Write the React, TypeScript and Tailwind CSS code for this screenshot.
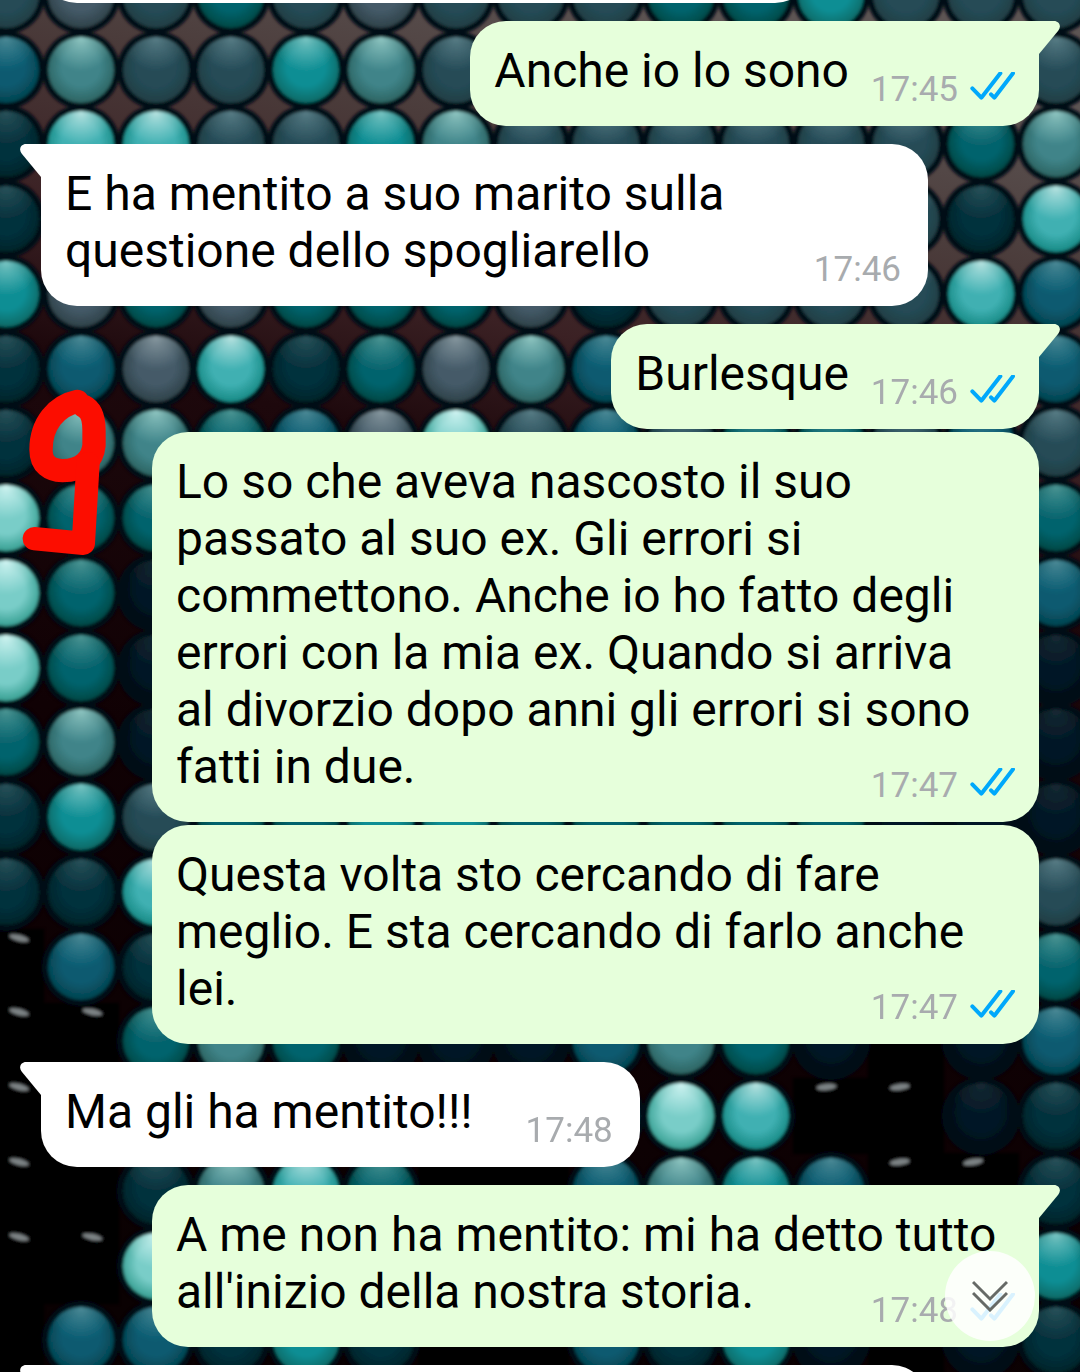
import React from "react";

type Message = {
  text: string;
  time: string;
  mine: boolean;
  tail: boolean;
};

const messages: Message[] = [
  { text: "Anche io lo sono", time: "17:45", mine: true, tail: true },
  { text: "E ha mentito a suo marito sulla questione dello spogliarello", time: "17:46", mine: false, tail: true },
  { text: "Burlesque", time: "17:46", mine: true, tail: true },
  {
    text: "Lo so che aveva nascosto il suo passato al suo ex. Gli errori si commettono. Anche io ho fatto degli errori con la mia ex. Quando si arriva al divorzio dopo anni gli errori si sono fatti in due.",
    time: "17:47",
    mine: true,
    tail: false,
  },
  { text: "Questa volta sto cercando di fare meglio. E sta cercando di farlo anche lei.", time: "17:47", mine: true, tail: false },
  { text: "Ma gli ha mentito!!!", time: "17:48", mine: false, tail: true },
  { text: "A me non ha mentito: mi ha detto tutto all'inizio della nostra storia.", time: "17:48", mine: true, tail: true },
];

/* Bead colours: top highlight, middle, lower rim */
const beads: Record<string, [string, string, string]> = {
  m: ["#d2f5f3", "#79cdc8", "#2f9a8c"],
  b: ["#b9e4e2", "#3fb0b2", "#12857f"],
  l: ["#8fc6c2", "#3f8489", "#2a605d"],
  c: ["#79c6c4", "#0f8e94", "#066560"],
  t: ["#4b9695", "#06636d", "#044540"],
  u: ["#4b8a97", "#085a70", "#05414b"],
  s: ["#587d86", "#254b57", "#203d42"],
  g: ["#8798a0", "#445a68", "#2c3f45"],
  d: ["#29525a", "#04303c", "#022327"],
  n: ["#152a33", "#021726", "#01080d"],
};

/* One letter per bead; k is an unlit bead with a glint, x is fully dark */
const wallpaperRows = [
  "sgstsgsssttcsss",
  "ulssclsssssssss",
  "dbbssclsssssstl",
  "dssssstttssssdb",
  "cgtgtttgdssssbu",
  "dugbdtglustsstu",
  "dlltugmsusttsus",
  "mtttttttttttttt",
  "mtnttttttttttnu",
  "mtnttttttttttnn",
  "tlntttttttttnnn",
  "dcsttcctttttnnn",
  "ddbcttttttttnns",
  "kudddttttttnnnt",
  "kktltnnnultnxnu",
  "kxdcccdnumbkknd",
  "kxdlbtxxulcukkd",
  "kkmcttxxtctxxnc",
  "xuudcdxxudcnxnd",
];

const columnStep = 75;
const rowStep = 75;

function Wallpaper() {
  const cells = wallpaperRows.flatMap((row, r) =>
    row.split("").map((kind, c) => ({
      key: `${r}-${c}`,
      kind,
      c,
      x: 6 + c * columnStep,
      y: -5 + r * rowStep - Math.round(r / 4),
    })),
  );
  const dark = cells.filter(({ kind }) => kind === "k" || kind === "x");
  const lit = cells.filter(({ kind }) => kind !== "k" && kind !== "x");

  return (
    <svg
      className="absolute inset-0 h-full w-full"
      viewBox="0 0 1080 1372"
      preserveAspectRatio="xMidYMid slice"
      aria-hidden="true"
    >
      <defs>
        <linearGradient id="gaps" x1="0.6" y1="0" x2="0.4" y2="1">
          <stop offset="0" stopColor="#5d5554" />
          <stop offset="0.12" stopColor="#4b3c3b" />
          <stop offset="0.25" stopColor="#3b2124" />
          <stop offset="0.35" stopColor="#1d080c" />
          <stop offset="0.6" stopColor="#100104" />
          <stop offset="1" stopColor="#0a0102" />
        </linearGradient>
        <filter id="soft" x="0" y="0" width="100%" height="100%">
          <feGaussianBlur stdDeviation="1.8" />
        </filter>
        {Object.entries(beads).map(([key, [, mid, low]]) => (
          <radialGradient key={key} id={`bead-${key}`} cx="0.5" cy="0.45" r="0.58">
            <stop offset="0" stopColor={mid} />
            <stop offset="0.5" stopColor={mid} />
            <stop offset="1" stopColor={low} />
          </radialGradient>
        ))}
        {Object.entries(beads).map(([key, [top]]) => (
          <radialGradient key={key} id={`shine-${key}`} cx="0.5" cy="0.02" r="0.5">
            <stop offset="0" stopColor={top} />
            <stop offset="0.3" stopColor={top} stopOpacity="0.65" />
            <stop offset="1" stopColor={top} stopOpacity="0" />
          </radialGradient>
        ))}
      </defs>
      <rect width="1080" height="1372" fill="url(#gaps)" />
      <g filter="url(#soft)">
        {dark.map(({ key, kind, c, x, y }) => {
          const gx = x + 13 - c * 1.6;
          const tilt = 14 - c * 1.8;
          return (
            <g key={key}>
              <rect x={x - 38} y={y - 38} width="76" height="76" fill="#010103" />
              {kind === "k" && (
                <ellipse cx={gx} cy={y - 29} rx="10" ry="3" fill="#7d8385" transform={`rotate(${tilt} ${gx} ${y - 29})`} />
              )}
            </g>
          );
        })}
        {lit.map(({ key, kind, x, y }) => (
          <g key={key}>
            <circle cx={x} cy={y} r="39" fill="#010a12" />
            <circle cx={x} cy={y} r="33" fill={`url(#bead-${kind})`} />
            <circle cx={x} cy={y} r="33" fill={`url(#shine-${kind})`} />
          </g>
        ))}
      </g>
    </svg>
  );
}

function RedNine() {
  return (
    <svg
      className="absolute left-5 top-[387px] h-[170px] w-[90px]"
      viewBox="60 50 270 510"
      fill="none"
      stroke="#fc0d00"
      strokeWidth="70"
      strokeLinecap="round"
      strokeLinejoin="round"
      role="img"
      aria-label="9"
    >
      <path d="M232 93C170 106 123 160 123 238C123 282 150 300 188 301C245 301 278 268 282 225V180C282 142 272 118 252 108" />
      <path d="M264 280L250 519L103 505" />
    </svg>
  );
}

function Ticks() {
  return (
    <svg
      className="mb-[6px] h-[30px] w-[45px]"
      viewBox="0 0 135 90"
      fill="none"
      stroke="#00a8fb"
      strokeWidth="12"
      strokeLinecap="round"
      strokeLinejoin="round"
      role="img"
      aria-label="Letto"
    >
      <path d="M7 49L34 77L91 4" />
      <path d="M63 67L73 77L129 4" />
    </svg>
  );
}

function Tail({ mine }: { mine: boolean }) {
  return mine ? (
    <svg className="absolute left-full top-0 h-[33px] w-[21px] fill-[#e6ffdb]" viewBox="0 0 21 33" aria-hidden="true">
      <path d="M0 0H15C20 0 23 5 19 10L0 33Z" />
    </svg>
  ) : (
    <svg className="absolute right-full top-0 h-[33px] w-[21px] fill-white" viewBox="0 0 21 33" aria-hidden="true">
      <path d="M21 0H6C1 0-2 5 2 10L21 33Z" />
    </svg>
  );
}

function Bubble({ message }: { message: Message }) {
  const { mine, tail, text, time } = message;
  const corner = tail ? (mine ? "rounded-tr-none" : "rounded-tl-none") : "";
  return (
    <article
      className={`relative w-fit max-w-[887px] rounded-[36px] pt-[21px] pr-10 pb-[27px] pl-6 ${corner} ${
        mine ? "bg-[#e6ffdb]" : "bg-white"
      }`}
    >
      {tail && <Tail mine={mine} />}
      <p className="text-[48px] leading-[57px]">
        {text}
        <span className={`inline-block h-px ${mine ? "w-[150px]" : "w-[127px]"}`} />
      </p>
      <footer
        className={`absolute bottom-[15px] flex items-center gap-3 text-[35px] leading-[42px] text-[#a8abae] ${
          mine ? "right-6" : "right-[27px]"
        }`}
      >
        <time>{time}</time>
        {mine && <Ticks />}
      </footer>
    </article>
  );
}

export default function App() {
  return (
    <main className="relative min-h-screen overflow-hidden bg-black text-black [font-family:Roboto,sans-serif]">
      <Wallpaper />
      <div className="relative flex flex-col">
        <div className="flex h-[3px] items-end overflow-hidden px-[41px]">
          <div className="h-20 w-[770px] shrink-0 rounded-b-[36px] bg-white" />
        </div>
        {messages.map((message, i) => {
          const grouped = i > 0 && !message.tail;
          return (
            <div
              key={i}
              className={`flex px-[41px] ${message.mine ? "justify-end" : "justify-start"} ${grouped ? "mt-[3px]" : "mt-[18px]"}`}
            >
              <Bubble message={message} />
            </div>
          );
        })}
        <div className="mt-[18px] flex h-[7px] items-start overflow-hidden px-[41px]">
          <div className="relative h-20 w-[887px] shrink-0 rounded-tr-[36px] bg-white">
            <Tail mine={false} />
          </div>
        </div>
      </div>
      <RedNine />
      <button
        type="button"
        aria-label="Vai agli ultimi messaggi"
        className="absolute bottom-[31px] right-[45px] flex size-[90px] items-center justify-center rounded-full bg-white/85"
      >
        <svg className="h-8 w-9" viewBox="0 0 36 32" fill="none" stroke="#666a66" strokeWidth="3" aria-hidden="true">
          <path d="M1 2L18 19L35 2M1 13L18 30L35 13" />
        </svg>
      </button>
    </main>
  );
}
